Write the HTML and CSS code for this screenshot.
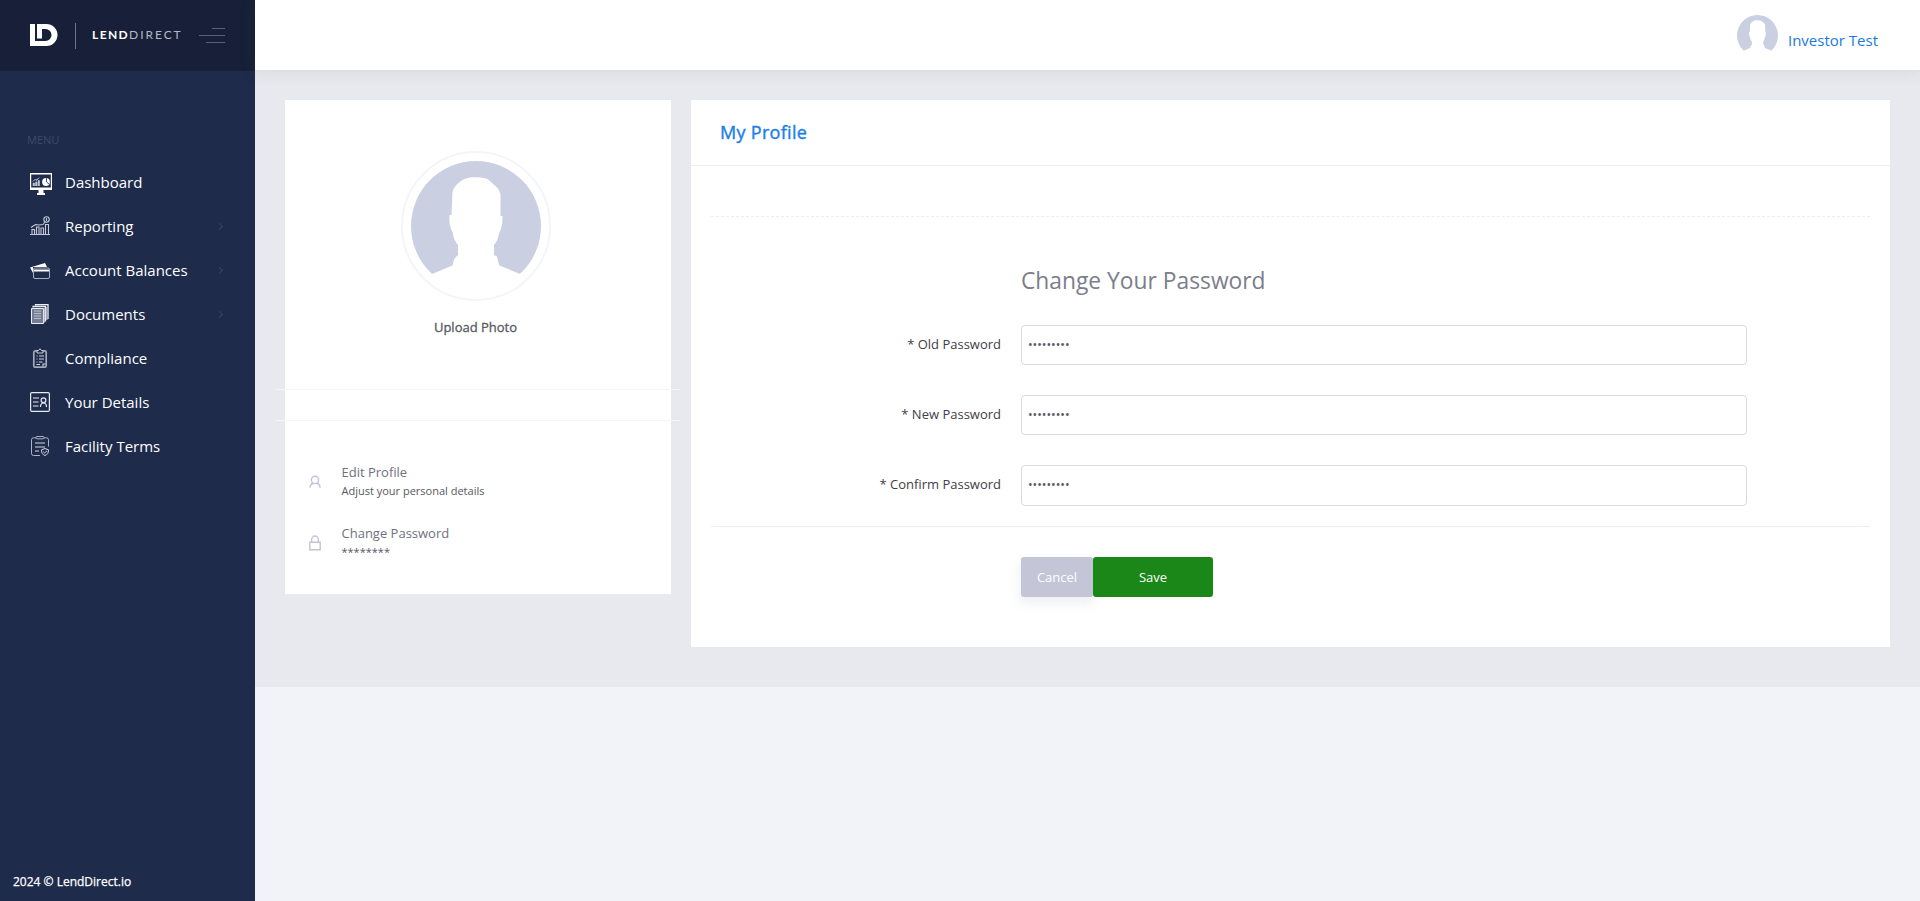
FILE: index.html
```html
<!DOCTYPE html>
<html lang="en">
<head>
<meta charset="utf-8">
<title>LendDirect - My Profile</title>
<link rel="stylesheet" href="styles.css">
</head>
<body>
<svg class="defs" width="0" height="0" aria-hidden="true">
  <symbol id="avatar" viewBox="0 0 130 130">
    <circle cx="65" cy="65" r="65" fill="#cad0e2"/>
    <path d="M59 16.500C51 17.500 43 24.500 41.500 31L40.500 54H38.500C38 62 39 67 41.500 71C42.500 77 44 81 47 84V94C43 97 42.500 100 41.500 104.500L21 113L19.500 114A66.500 66.500 0 0 0 110.500 114L109 113L88.500 104.500C87.500 103 87 99 86 95.500L83 94V84C86 81 87 77 88.500 71C91 67 91.500 62 91.500 55H89.500V34C89 31 88 28.500 86 26.500L77 18.300C72 16.300 65 16.200 59 16.500Z" fill="#fff"/>
  </symbol>
</svg>
<div class="app">
  <aside class="sidebar">
    <div class="brand">
      <svg class="logo" width="28" height="22" viewBox="0 0 28 22"><path d="M0 0H5V17H15.500A6 6 0 0 0 15.500 5H12V14.500H7V0H16.500A11 11 0 0 1 16.500 22H0Z" fill="#fff"/></svg>
      <span class="divider"></span>
      <span class="wordmark"><b>LEND</b>DIRECT</span>
      <span class="toggle"><i></i><i></i><i></i></span>
    </div>
    <nav class="nav">
      <div class="nav-title">MENU</div>
      <a class="item">
        <svg class="monitor" width="22" height="22" viewBox="0 0 22 22"><path d="M0 0H22V17H13.500V20H15V22H7V20H8.500V17H0ZM1.200 1.500V14.500H20.800V1.500Z" fill="#fff" fill-rule="evenodd"/><path d="M3 13V10H4.500V13M5.500 13V9H7V13M8 13V7.500H9.500V13M2.500 8.500L5 6.500L6.500 7.500L9.500 4.500" fill="#bfc5d2" stroke="#bfc5d2" stroke-width=".6"/><circle cx="16" cy="9" r="3.900" fill="#fff"/><path d="M16.500 5V9L19 11" stroke="#1e2b4b" stroke-width=".8" fill="none"/></svg>
        <span>Dashboard</span></a>
      <a class="item">
        <svg width="20" height="20" viewBox="0 0 20 20" fill="none" stroke="#c5cad6" stroke-width="1.100"><path d="M0 18.500H20M2 18V13.500H4.500V18M6.500 18V11H9V18M11 18V12H13.500V18M15.500 18V8.500H18.500V18M1 11.500L5.500 8.500L9 9L13 8.500L15 6"/><circle cx="16.500" cy="3.500" r="2.700"/><path d="M16.500 2V5"/></svg>
        <span>Reporting</span><em class="arrow"></em></a>
      <a class="item">
        <svg width="20" height="20" viewBox="0 0 20 20"><path d="M0 7.500L15 3L17 7H3V13Z" fill="#fff"/><path d="M3 9.500H20V11.500H3Z" fill="#fff"/><rect x="3.500" y="8" width="16" height="10.500" rx="1.500" fill="none" stroke="#a9b0c0"/></svg>
        <span>Account Balances</span><em class="arrow"></em></a>
      <a class="item">
        <svg width="20" height="20" viewBox="0 0 20 20"><path d="M1.500 4.500H13.500V19.500H1.500Z" fill="#747d92" stroke="#eceef2"/><path d="M3 3.500V2.500H15.500V17.500M5.500 1.500V.7H18V15" fill="none" stroke="#eceef2" stroke-width="1.300"/><path d="M14.500 4V18.500M16.800 3V16" stroke="#aeb4c2" stroke-width="1.400"/><path d="M4 7H11M4 9.500H11M4 12H11M4 14.500H11" stroke="#cdd1da" stroke-width=".8"/></svg>
        <span>Documents</span><em class="arrow"></em></a>
      <a class="item">
        <svg width="20" height="20" viewBox="0 0 20 20"><rect x="3.800" y="2.800" width="12.400" height="16.400" rx="1.500" fill="none" stroke="#a1a8b9" stroke-width="1.700"/><path d="M7 5V2.500H8.500L10 .7L11.500 2.500H13V5Z" fill="#1e2b4b" stroke="#c5cad6"/><path d="M6.500 8H7.500M9 8H14M6.500 11H7.500M9 11H14M6.500 14H7.500M9 14H12.500M6.500 16.500H10M13 18.500V16H15.500" stroke="#d2d6de" fill="none" stroke-width="1.100"/></svg>
        <span>Compliance</span></a>
      <a class="item">
        <svg width="20" height="20" viewBox="0 0 20 20" fill="none" stroke="#e8eaef" stroke-width="1.200"><rect x=".6" y=".6" width="18.800" height="18.800" rx="1.300"/><path d="M3 6H9M3 10H8.500M3 14H8.500M10.500 15C10.500 12 11.500 11 13.500 11S16.500 12 16.500 15"/><circle cx="13.500" cy="8.300" r="2.400"/></svg>
        <span>Your Details</span></a>
      <a class="item">
        <svg width="20" height="20" viewBox="0 0 20 20" fill="none" stroke="#aeb4c3" stroke-width="1"><path d="M6 1.800H3.500Q1.500 1.800 1.500 3.800V17.500Q1.500 19.500 3.500 19.500H10M14 1.800H16.500Q18.500 1.800 18.500 3.800V10.500"/><rect x="6" y=".5" width="8" height="2.300" rx="1"/><path d="M5 7H15M5 11H15M5 15H9" stroke="#d5d8e0"/><path d="M15 12.500L18.500 13.800C18.500 17 17.500 18.500 15 19.500C12.500 18.500 11.500 17 11.500 13.800ZM13.300 15.800L14.700 17L17 14.800" stroke="#d5d8e0"/></svg>
        <span>Facility Terms</span></a>
    </nav>
    <footer class="copyright">2024 © LendDirect.io</footer>
  </aside>
  <div class="page">
    <header class="header">
      <svg width="41" height="41"><use href="#avatar"/></svg>
      <a class="user">Investor Test</a>
    </header>
    <main class="content">
      <section class="card profile">
        <div class="photo"><svg width="130" height="130"><use href="#avatar"/></svg></div>
        <div class="upload">Upload Photo</div>
        <div class="band"></div>
        <div class="link">
          <svg width="12" height="16" viewBox="0 0 12 16" fill="none" stroke="#c4c3d6" stroke-width="1.400"><circle cx="6" cy="5.900" r="3.600"/><path d="M.7 13.700C1.200 11 2.500 9.700 4.200 9M11.300 13.700C10.800 11 9.500 9.700 7.800 9"/></svg>
          <div><div class="link-title">Edit Profile</div><div class="link-note">Adjust your personal details</div></div>
        </div>
        <div class="link">
          <svg width="12" height="16" viewBox="0 0 12 16" fill="none" stroke="#c4c3d6" stroke-width="1.400"><path d="M.8 7.200H11.200V14.800H.8ZM2.600 7V4.800A3.400 3.800 0 0 1 9.400 4.800V7"/></svg>
          <div><div class="link-title">Change Password</div><div class="link-note">********</div></div>
        </div>
      </section>
      <section class="card main">
        <h1 class="title">My Profile</h1>
        <form class="form">
          <div class="dashed"></div>
          <h2 class="subtitle">Change Your Password</h2>
          <div class="row"><label for="old">* Old Password</label><input id="old" type="password" value="password1"></div>
          <div class="row"><label for="new">* New Password</label><input id="new" type="password" value="password1"></div>
          <div class="row"><label for="confirm">* Confirm Password</label><input id="confirm" type="password" value="password1"></div>
          <div class="actions"><button type="button" class="cancel">Cancel</button><button type="button" class="save">Save</button></div>
        </form>
      </section>
    </main>
  </div>
</div>
</body>
</html>
```
FILE: styles.css
```css
* { box-sizing: border-box; }
body { margin: 0; background: #f1f3f8; font-family: "Open Sans", sans-serif; font-size: 13px; overflow: hidden; }
.defs { position: absolute; }
.app { display: flex; height: 901px; }
svg { flex: none; display: block; }

.sidebar { width: 255px; flex: none; background: #1e2b4b; display: flex; flex-direction: column; }
.brand { height: 71px; background: #172038; display: flex; align-items: center; padding-left: 30px; }
.logo { margin-top: -1px; }
.divider { width: 1px; height: 26px; background: #6d7485; margin-left: 17px; }
.wordmark { font-family: Lato, sans-serif; font-size: 12px; line-height: 14px; letter-spacing: 1.95px; color: #b4b9c3; margin-left: 16px; width: 107px; margin-top: -2px; white-space: nowrap; }
.wordmark b { font-weight: 700; color: #fff; letter-spacing: 1.4px; }
.toggle { width: 26px; display: flex; flex-direction: column; align-items: flex-end; gap: 6px; }
.toggle i { height: 1px; width: 26px; background: #5b6078; }
.toggle i:first-child { width: 13px; }
.toggle i:last-child { width: 19px; }
.nav { flex: 1; padding-top: 59px; }
.nav-title { font-size: 11px; line-height: 20px; color: #414868; padding-left: 27px; margin-bottom: 10px; }
.item { height: 44px; display: flex; align-items: center; padding-left: 30px; color: #fff; font-size: 15px; position: relative; }
.item span { position: absolute; left: 65px; line-height: 20px; }
.monitor { margin-top: 3px; }
.arrow { width: 5px; height: 5px; border: solid #3b4562; border-width: 1px 1px 0 0; transform: rotate(45deg); margin: 0 33px 0 auto; }
.copyright { color: #fff; font-size: 12px; -webkit-text-stroke: .25px #fff; line-height: 18px; padding: 0 0 10px 13px; }

.page { flex: 1; min-width: 0; }
.header { height: 70px; background: #fff; display: flex; padding: 15px 42px 0 0; justify-content: flex-end; gap: 10px; box-shadow: 0 1px 15px 1px rgba(69, 65, 78, .1); position: relative; }
.user { color: #1a7ad9; font-size: 15px; line-height: 20px; margin-top: 15px; }
.content { height: 617px; background: #e8e9ee; padding: 30px 30px 40px; display: flex; gap: 20px; align-items: flex-start; }
.card { background: #fff; }
.profile { width: 386px; height: 494px; padding-top: 51px; }
.photo { width: 150px; height: 150px; margin: 0 0 0 116px; border: 2px solid #f4f5fa; border-radius: 50%; padding: 8px; }
.upload { text-align: center; -webkit-text-stroke: .3px #575962; color: #575962; line-height: 20px; margin: 16px 5px 0 0; }
.band { margin: 52px -9px 30px; height: 32px; border: solid #f4f5f8; border-width: 1px 0; }
.link { height: 61px; display: flex; align-items: center; padding-left: 24px; gap: 20.5px; }
.link-title { color: #6f727d; line-height: 19px; }
.link-note { color: #575962; font-size: 11px; line-height: 18px; }
.main { flex: 1; height: 547px; }
.title { margin: 0; height: 66px; border-bottom: 1px solid #ebedf2; padding-left: 29px; font-size: 18px; font-weight: 400; -webkit-text-stroke: .4px #1c7fe8; letter-spacing: .3px; line-height: 64px; color: #1c7fe8; }
.form { padding: 50px 20px 0; }
.dashed { border-top: 1px dashed #ebedf2; }
.subtitle { margin: 48px 0 28px 310px; font-size: 22.8px; font-weight: 400; line-height: 32px; color: #7b7e8a; }
.row { display: flex; height: 40.2px; margin-bottom: 30px; }
.row label { width: 290px; text-align: right; margin-right: 20px; color: #3f4047; line-height: 20px; padding-top: 9px; }
.row input { width: 726px; height: 100%; border: 1px solid #d9dadc; border-radius: 4px; padding: 0 6px 1px; color: #575962; font: 12.3px "Open Sans", sans-serif; outline: 0; }
.actions { border-top: 1px solid #ebedf2; margin-top: -10px; padding: 30px 0 0 310px; display: flex; }
.actions button { height: 40px; border: 0; border-radius: 3px; color: #fff; font: 13px "Open Sans", sans-serif; padding: 0; }
.cancel { width: 72px; background: #c4c5d6; box-shadow: 0 5px 10px 2px rgba(152, 160, 180, .15); }
.actions .save { width: 120px; background: #1b8718; position: relative; }
```
